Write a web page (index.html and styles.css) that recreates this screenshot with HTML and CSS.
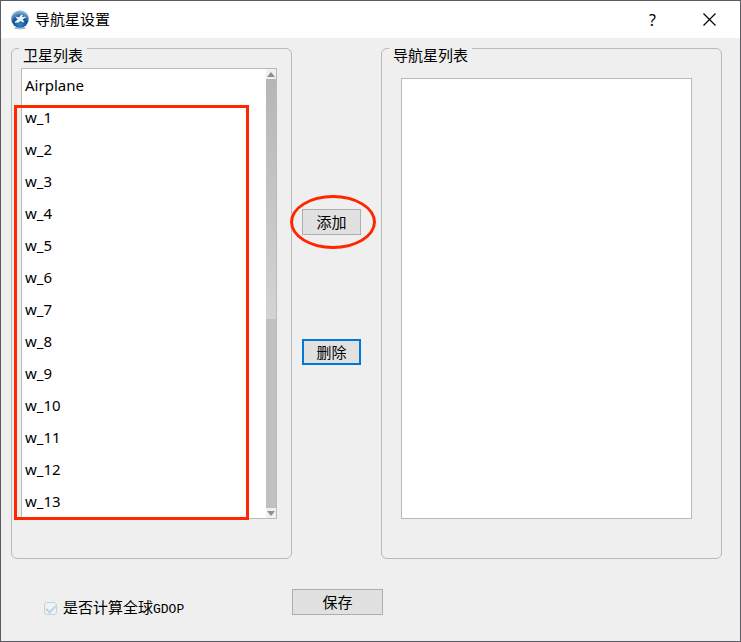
FILE: index.html
```html
<!DOCTYPE html>
<html lang="zh-CN">
<head>
  <meta charset="UTF-8" />
  <meta name="viewport" content="width=device-width, initial-scale=1" />
  <title>导航星设置</title>
  <link rel="stylesheet" href="styles.css">
</head>
<body>
  <header class="titlebar">
    <svg class="app-icon" viewBox="0 0 20 20" aria-hidden="true">
      <defs>
        <radialGradient id="ball" cx="0.5" cy="0.8" r="0.8">
          <stop offset="0" stop-color="#2f86c8" />
          <stop offset="0.5" stop-color="#12508f" />
          <stop offset="1" stop-color="#a9cbe6" />
        </radialGradient>
      </defs>
      <ellipse cx="10" cy="18" rx="6" ry="1.4" fill="#a8bdd0" />
      <circle cx="10" cy="9" r="8.8" fill="url(#ball)" />
      <path d="M5 6.500l4 .8 2.500-2.800 1.300.5-.6 2.300 3.300-.8.300 1-3.200 2 1.800 2.300-1.200.8-2.700-1.600-2.500 1.800-1.500-.4-1.700.6.600-1.700 2.300-1.700z" fill="#e8f3fb" />
    </svg>
    <h1>导航星设置</h1>
    <button class="title-btn" type="button" aria-label="帮助">?</button>
    <button class="title-btn" type="button" aria-label="关闭">
      <svg class="close-icon" viewBox="0 0 13 13" aria-hidden="true">
        <path d="M.5.5l12 12M12.500.5l-12 12" stroke="#000" stroke-width="1.200" />
      </svg>
    </button>
  </header>

  <main class="panels">
    <fieldset class="panel satellites">
      <legend>卫星列表</legend>
      <div class="list-box">
        <ul class="list">
          <li>Airplane</li>
          <li>w_1</li>
          <li>w_2</li>
          <li>w_3</li>
          <li>w_4</li>
          <li>w_5</li>
          <li>w_6</li>
          <li>w_7</li>
          <li>w_8</li>
          <li>w_9</li>
          <li>w_10</li>
          <li>w_11</li>
          <li>w_12</li>
          <li>w_13</li>
        </ul>
        <div class="scrollbar">
          <span class="arrow up"></span>
          <span class="thumb"></span>
          <span class="track"></span>
          <span class="arrow down"></span>
        </div>
        <div class="mark-rect"></div>
      </div>
    </fieldset>

    <div class="actions">
      <div class="marked">
        <button class="btn" type="button">添加</button>
        <div class="mark-ellipse"></div>
      </div>
      <button class="btn focused" type="button">删除</button>
    </div>

    <fieldset class="panel guides">
      <legend>导航星列表</legend>
      <div class="list-box"></div>
    </fieldset>
  </main>

  <footer class="footer">
    <div class="option">
      <input type="checkbox" id="gdop" checked />
      <label for="gdop">是否计算全球<span class="latin">GDOP</span></label>
    </div>
    <button class="btn save" type="button">保存</button>
  </footer>
</body>
</html>
```

FILE: styles.css
```css
* {
  box-sizing: border-box;
}

body {
  margin: 0;
  min-height: 100vh;
  display: flex;
  flex-direction: column;
  border: 1px solid #5c5a62;
  background-color: #efefef;
  font-family: "Noto Sans CJK SC", sans-serif;
  font-size: 15px;
  color: #000;
}

.titlebar {
  display: flex;
  align-items: center;
  height: 37px;
  padding-left: 9px;
  padding-right: 2px;
  background: #fff;
}

.app-icon {
  width: 20px;
  height: 20px;
}

.titlebar h1 {
  flex: 1;
  margin: 0;
  padding: 0 0 2px 5px;
  font-size: 15px;
  font-weight: normal;
  line-height: 20px;
}

.title-btn {
  display: flex;
  align-items: center;
  justify-content: center;
  width: 57px;
  height: 36px;
  padding: 0;
  border: none;
  background: none;
  font-family: "Noto Sans", sans-serif;
  font-size: 16px;
  color: #000;
}

.close-icon {
  width: 13px;
  height: 13px;
}

.panels {
  flex: 1;
  display: grid;
  grid-template-columns: minmax(0, 281fr) 89px minmax(0, 341fr);
  padding: 10px 18px 0 10px;
}

.panel {
  display: flex;
  min-width: 0;
  margin: 0;
  padding: 0 7px;
  border: 1px solid #b9b9b9;
  border-radius: 6px;
}

/* thin legend box, so the caption hangs just under the border line */
legend {
  height: 1px;
  padding: 0 4px;
  line-height: 14px;
  white-space: nowrap;
}

.list-box {
  position: relative;
  flex: 1;
  display: flex;
  border: 1px solid #b9b9b9;
  background: #fff;
}

.satellites .list-box {
  margin: 19px 7px 39px 2px;
}

.guides .list-box {
  margin: 29px 22px 39px 12px;
}

.list {
  flex: 1;
  margin: 0;
  padding: 0;
  list-style: none;
}

.list li {
  padding-left: 3px;
  font-family: "Noto Sans", sans-serif;
  font-size: 15px;
  line-height: 32px;
}

.scrollbar {
  display: flex;
  flex-direction: column;
  width: 10px;
}

.arrow {
  display: flex;
  align-items: center;
  justify-content: center;
  height: 10px;
  background: #f0f0f0;
}

.arrow::before {
  content: "";
  border: 4px solid transparent;
}

.up::before {
  border-top: none;
  border-bottom: 5px solid #909090;
}

.down::before {
  border-bottom: none;
  border-top: 5px solid #909090;
}

.thumb {
  flex: 240;
  background: linear-gradient(#b6b6b6, #d4d4d4);
}

.track {
  flex: 189;
  background: #c0c0c0;
}

.mark-rect {
  position: absolute;
  top: 36px;
  right: 27px;
  bottom: -2px;
  left: -8px;
  border: 3px solid #ff2600;
}

.actions {
  display: flex;
  flex-direction: column;
  gap: 104px;
  padding: 161px 20px 0 10px;
}

.marked {
  position: relative;
  display: flex;
}

.mark-ellipse {
  position: absolute;
  top: -14px;
  right: -15px;
  bottom: -14px;
  left: -12px;
  border: 3px solid #ff2600;
  border-radius: 50%;
  pointer-events: none;
}

.btn {
  width: 59px;
  height: 26px;
  padding: 0;
  border: 1px solid #adadad;
  background: #e1e1e1;
  font-family: inherit;
  font-size: 15px;
  line-height: 20px;
  color: #000;
}

.btn.focused {
  border: 2px solid #0078d7;
}

.footer {
  display: grid;
  grid-template-columns: minmax(0, 281fr) 91px minmax(0, 339fr);
  align-items: start;
  height: 82px;
  padding: 30px 18px 0 10px;
}

.option {
  display: flex;
  align-items: center;
  gap: 6px;
  padding: 8px 0 0 33px;
  line-height: 20px;
  white-space: nowrap;
}

.option input {
  appearance: none;
  display: flex;
  justify-content: center;
  width: 13px;
  height: 13px;
  margin: 0;
  border: 1px solid #c3d3dc;
  border-radius: 3px;
  background: #edf3f6;
}

.option input:checked::before {
  content: "";
  width: 4px;
  height: 8px;
  border: solid #c3d3dc;
  border-width: 0 2px 2px 0;
  transform: rotate(45deg);
}

.latin {
  font-family: "Liberation Mono", monospace;
  font-size: 13px;
}

.btn.save {
  width: 91px;
}
```
